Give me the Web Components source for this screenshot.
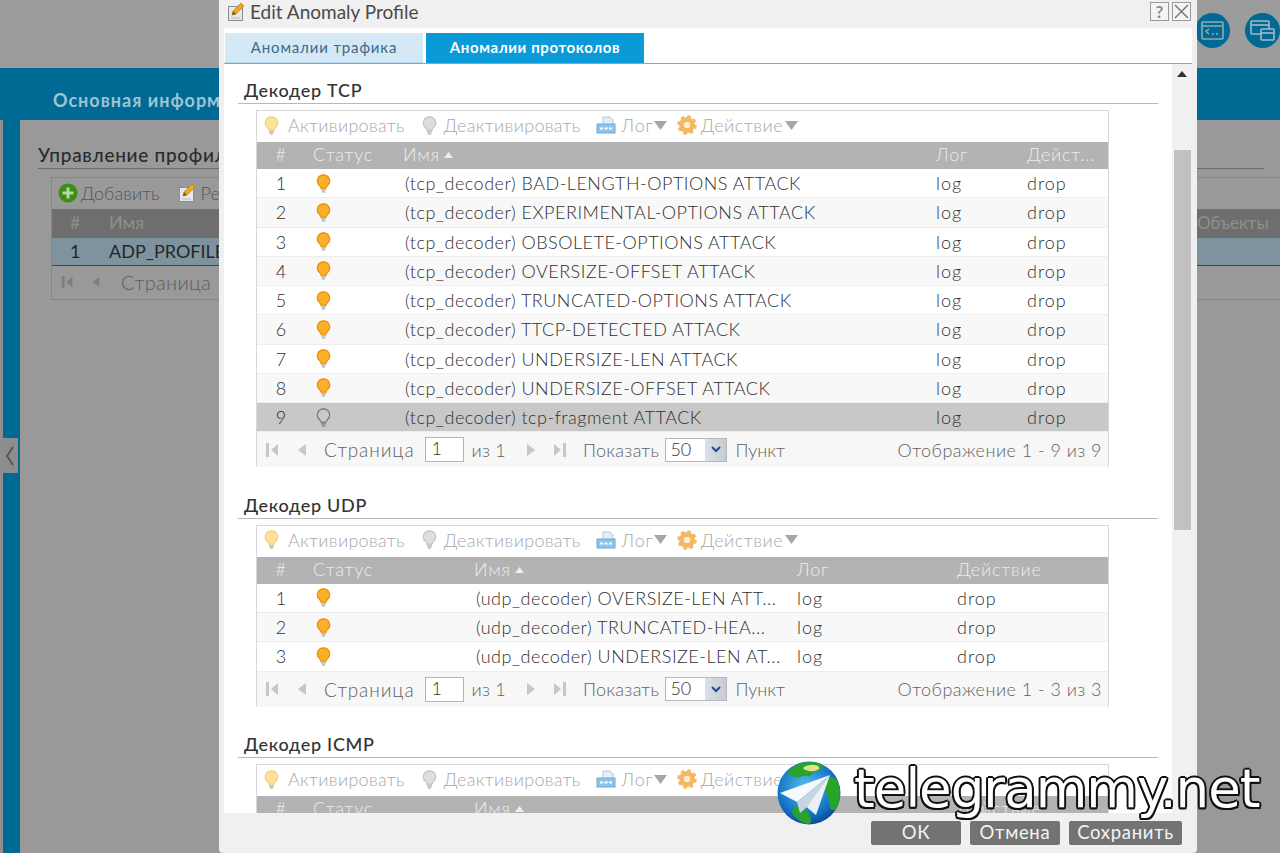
<!DOCTYPE html>
<html>
<head>
<meta charset="utf-8">
<title>Edit Anomaly Profile</title>
<style>
  html, body { margin: 0; height: 100%; overflow: hidden; }
  body { font-family: "Lato", "Open Sans", sans-serif; background: #9a9a9a; }
</style>
</head>
<body>
<bg-page></bg-page>
<anomaly-dialog></anomaly-dialog>
<tg-mark></tg-mark>

<script>
const BULB_ON = ['#fbb02a', '#ee8f00'];
const BULB_PALE = ['#ffe29a', '#f4cf78'];
const BULB_OFF = ['#dedede', '#c4c4c4'];

function bulb(c, outline) {
  const fill = outline ? 'none' : c[0];
  const edge = outline ? '#777' : c[1];
  return `<svg width="15" height="21" viewBox="0 0 16 21"><path d="M8 1.200a6.600 6.600 0 0 0-4 11.800c.9.8 1.200 1.500 1.300 2.500h5.400c.1-1 .4-1.700 1.300-2.500A6.600 6.600 0 0 0 8 1.200z" fill="${fill}" stroke="${edge}" stroke-width="1.300"/><path d="M5.400 16.500h5.200v1.500H5.400zM6.300 18.700h3.400V20H6.300z" fill="${outline ? '#777' : '#a8a8a8'}"/></svg>`;
}

const LOG_ICON = `<svg width="20" height="18" viewBox="0 0 20 18"><path d="M7 1h7l3 3v5H7z" fill="#e6eef5" stroke="#b5c6d6"/><rect x="1" y="8" width="18" height="9" fill="#8cc4ea" stroke="#6ea9d2"/><path d="M4 12.500h3M8.500 12.500h3M13 12.500h3" stroke="#fff" stroke-width="2"/></svg>`;
const GEAR_ICON = `<svg width="20" height="20" viewBox="0 0 20 20"><circle cx="10" cy="10" r="5.500" fill="none" stroke="#f3b765" stroke-width="5"/><circle cx="10" cy="10" r="8.200" fill="none" stroke="#f3b765" stroke-width="3.200" stroke-dasharray="3.400 3.040"/><circle cx="10" cy="10" r="3" fill="#fff0cf"/></svg>`;
const EDIT_ICON = `<svg width="20" height="21" viewBox="0 0 20 21"><rect x="1.500" y="5.500" width="14" height="14" fill="#e8e8e8" stroke="#8c8c8c"/><path d="M5 14l1-4 8-8 3 3-8 8z" fill="#f2a51e" stroke="#c87a00" stroke-width=".7"/><path d="M5 14l4-1-3-3z" fill="#7a5a30"/><path d="M4 17h9" stroke="#bbb"/></svg>`;
const DOWN_TRI = `<svg width="13" height="9" viewBox="0 0 13 9" style="flex:none"><path d="M0 0h13L6.500 9z" fill="#a6a6a6"/></svg>`;

class BgPage extends HTMLElement {
  constructor() {
    super();
    this.attachShadow({ mode: 'open' });
    this.shadowRoot.innerHTML = `
      <style>
        :host { display: flex; flex-direction: column; height: 853px; color: #2b2b2b; font-size: 18px; background: #999; }
        .top { height: 68px; flex: none; background: #9c9c9c; display: flex; justify-content: flex-end; align-items: flex-start; gap: 15px; padding: 13px 0 0; box-sizing: border-box; }
        .circle { width: 35px; height: 35px; border-radius: 50%; background: #006a94; display: flex; align-items: center; justify-content: center; }
        .blue { height: 52px; flex: none; background: #006a94; color: #9ec3d3; font-weight: 700; font-size: 18px; padding: 21px 0 0 53px; box-sizing: border-box; letter-spacing: 1px; white-space: nowrap; }
        .main { flex: 1; display: flex; min-height: 0; }
        .side { width: 3px; background: #8f8f8f; }
        .rail { width: 17px; background: #006a94; display: flex; align-items: center; }
        .handle { width: 16px; height: 35px; margin-left: -1px; background: #8d8d8d; display: flex; align-items: center; justify-content: center; position: relative; top: -31px; }
        .content { flex: 1; padding: 24px 16px 0 18px; min-width: 0; }
        h2 { margin: 0; font-size: 19px; line-height: 22px; font-weight: 500; letter-spacing: .7px; border-bottom: 1px solid #6d6d6d; padding-bottom: 2px; white-space: nowrap; }
        .grid { margin: 8px 0 0 13px; width: 1300px; border: 1px solid #868686; }
        .bar { height: 31px; display: flex; align-items: center; gap: 3px; padding: 0 0 2px 6px; box-sizing: border-box; color: #555; font-weight: 300; }
        .hd { height: 29px; background: #6e6e6e; color: #8e8e8e; display: flex; align-items: center; padding-bottom: 4px; box-sizing: border-box; }
        .row { height: 28px; background: #7f939f; color: #262626; display: flex; align-items: center; border-bottom: 1px solid #444; box-sizing: border-box; padding-bottom: 2px; }
        .num { width: 57px; padding-left: 18px; box-sizing: border-box; }
        .obj { position: absolute; left: 1197px; top: 212px; color: #8e8e8e; font-size: 17px; }
        .pg { height: 33px; display: flex; align-items: center; color: #5d5d5d; font-weight: 300; padding: 0 0 1px 9px; box-sizing: border-box; gap: 8px; }
        .pg .lbl { font-size: 20px; letter-spacing: .3px; margin-left: 12px; }
      </style>
      <div class="top">
        <div class="circle"><svg width="25" height="21" viewBox="0 0 25 21" fill="none" stroke="#8fa9b5" stroke-width="1.600"><rect x="2" y="2" width="21" height="17" rx="1"/><path d="M2 6h21M9 9l-3 2.500 3 2.500M12 14h2M16 14h2"/></svg></div>
        <div class="circle"><svg width="27" height="23" viewBox="0 0 27 23" fill="none" stroke="#a5bac4" stroke-width="1.600"><rect x="2" y="2" width="18" height="13" rx="1"/><path d="M2 6h18"/><rect x="12" y="10" width="13" height="11" rx="1" fill="#006a94"/><path d="M12 14h13"/></svg></div>
      </div>
      <div class="blue">Основная информация</div>
      <div class="main">
        <div class="side"></div>
        <div class="rail"><div class="handle"><svg width="10" height="22" viewBox="0 0 10 22"><path d="M8 2L2 11l6 9" fill="none" stroke="#4f4f4f" stroke-width="1.600"/></svg></div></div>
        <div class="content">
          <h2>Управление профилем</h2>
          <div class="grid">
            <div class="bar"><svg width="20" height="20" viewBox="0 0 20 20"><circle cx="10" cy="10" r="9.500" fill="#3c8f14"/><path d="M10 4.500v11M4.500 10h11" stroke="#b6d6a6" stroke-width="3"/></svg><span>Добавить</span><span style="width:12px"></span>${EDIT_ICON}<span>Редактировать</span></div>
            <div class="hd"><span class="num">#</span><span>Имя</span></div>
            <div class="row"><span class="num">1</span><span>ADP_PROFILE</span></div>
            <div class="pg">
              <svg width="14" height="16" viewBox="0 0 16 16" fill="#7e7e7e"><path d="M1 1h3v14H1zM13 2v12L6 8z"/></svg>
              <svg style="margin-left:8px" width="10" height="16" viewBox="0 0 12 16" fill="#7e7e7e"><path d="M10 2v12L2 8z"/></svg>
              <span class="lbl">Страница</span>
            </div>
          </div>
        </div>
      </div>
      <span class="obj">Объекты</span>`;
  }
}

class ToolBar extends HTMLElement {
  constructor() {
    super();
    this.attachShadow({ mode: 'open' });
    this.shadowRoot.innerHTML = `
      <style>
        :host { display: flex; align-items: center; height: 31px; padding: 0 0 3px 7px; box-sizing: border-box; color: #a8a8a8; font-size: 18px; font-weight: 300; letter-spacing: .3px; white-space: nowrap; overflow: hidden; }
        svg { flex: none; }
        .grp { display: flex; align-items: center; }
      </style>
      ${bulb(BULB_PALE)}<span style="margin-left:9px">Активировать</span>
      <div class="grp" style="margin-left:17px">${bulb(BULB_OFF)}<span style="margin-left:7px">Деактивировать</span></div>
      <div class="grp" style="margin-left:15px">${LOG_ICON}<span style="margin-left:6px;letter-spacing:.8px">Лог</span>${DOWN_TRI}</div>
      <div class="grp" style="margin-left:10px">${GEAR_ICON}<span style="margin-left:4px;letter-spacing:.5px">Действие</span><span style="margin-left:2px;display:flex">${DOWN_TRI}</span></div>`;
  }
}

class PagerBar extends HTMLElement {
  connectedCallback() {
    const total = this.getAttribute('total');
    this.attachShadow({ mode: 'open' });
    this.shadowRoot.innerHTML = `
      <style>
        :host { display: flex; align-items: center; height: 35px; background: #f7f7f7; color: #626262; font-size: 18px; font-weight: 300; white-space: nowrap; padding: 0 6px 0 8px; }
        svg { flex: none; }
        .lbl { font-size: 19px; letter-spacing: .9px; margin-left: 16px; }
        .box { width: 31px; height: 23px; border: 1px solid #b5b5b5; background: #fff; margin: 0 8px 0 10px; padding-left: 6px; line-height: 21px; color: #333; }
        .sel { width: 60px; height: 22px; border: 1px solid #b8b8b8; margin: 0 8px 0 6px; display: flex; background: #fff; color: #333; line-height: 21px; }
        .sel b { font-weight: 300; flex: 1; padding-left: 4px; }
        .sel u { width: 21px; background: linear-gradient(90deg, #dde0e6, #c5cbd5); display: flex; align-items: center; justify-content: center; }
        .end { margin-left: auto; letter-spacing: .45px; }
      </style>
      <svg width="16" height="16" viewBox="0 0 16 16" fill="#c6c6c6"><path d="M1 1h3v14H1zM13 2v12L6 8z"/></svg>
      <svg style="margin-left:15px" width="12" height="16" viewBox="0 0 12 16" fill="#c6c6c6"><path d="M10 2v12L2 8z"/></svg>
      <span class="lbl">Страница</span>
      <div class="box">1</div>
      <span style="letter-spacing:.2px">из 1</span>
      <svg style="margin-left:19px" width="12" height="16" viewBox="0 0 12 16" fill="#c6c6c6"><path d="M2 2v12l8-6z"/></svg>
      <svg style="margin-left:14px" width="16" height="16" viewBox="0 0 16 16" fill="#c6c6c6"><path d="M15 1h-3v14h3zM3 2v12l7-6z"/></svg>
      <span style="margin-left:16px;letter-spacing:.3px">Показать</span>
      <div class="sel"><b>50</b><u><svg width="10" height="7" viewBox="0 0 10 7"><path d="M1 1l4 4 4-4" fill="none" stroke="#24498c" stroke-width="2"/></svg></u></div>
      <span>Пункт</span>
      <span class="end">Отображение 1 - ${total} из ${total}</span>`;
  }
}

class DecoderTable extends HTMLElement {
  connectedCallback() {
    const cols = this.getAttribute('cols').split(',').map(Number);
    const rows = JSON.parse(this.getAttribute('rows') || '[]');
    const headers = ['#', 'Статус', 'Имя', 'Лог', this.getAttribute('last')];
    const tpl = `grid-template-columns:${cols.map(c => c + 'px').join(' ')}`;
    this.attachShadow({ mode: 'open' });
    this.shadowRoot.innerHTML = `
      <style>
        :host { display: block; margin-left: 18px; width: 853px; border: 1px solid #d8d8d8; border-bottom: 0; box-sizing: border-box; }
        .hd, .row { display: grid; align-items: center; font-size: 18px; white-space: nowrap; }
        .hd { height: 27px; background: #b3b3b3; color: #ececec; font-weight: 300; padding-bottom: 3px; box-sizing: border-box; letter-spacing: .8px; }
        .row { height: 29.250px; color: #303030; background: #fff; box-sizing: border-box; border-bottom: 1px solid #ededed; font-weight: 300; }
        .row:nth-child(even) { background: #f8f8f8; }
        .row.sel { background: #c8c8c8; }
        .c { min-width: 0; }
        .n { text-align: center; padding-right: 8px; }
        .arrow { display: inline-block; margin-left: 4px; vertical-align: 3px; }
        .name { padding-left: 2px; letter-spacing: .5px; }
        .v { letter-spacing: 1px; }
      </style>
      <tool-bar></tool-bar>
      <div class="hd" style="${tpl}">
        <span class="c n">${headers[0]}</span>
        <span class="c">${headers[1]}</span>
        <span class="c">${headers[2]}<svg class="arrow" width="9" height="6" viewBox="0 0 9 6"><path d="M4.500 0L9 6H0z" fill="#eee"/></svg></span>
        <span class="c">${headers[3]}</span>
        <span class="c">${headers[4]}</span>
      </div>
      <div>
      ${rows.map((r, i) => `
        <div class="row ${r.off ? 'sel' : ''}" style="${tpl}">
          <span class="c n">${i + 1}</span>
          <span class="c" style="display:flex;padding-left:3px">${r.off ? bulb(BULB_OFF, true) : bulb(BULB_ON)}</span>
          <span class="c name">${r.name}</span>
          <span class="c v">log</span>
          <span class="c v">drop</span>
        </div>`).join('')}
      </div>
      ${rows.length ? `<pager-bar total="${rows.length}"></pager-bar>` : ''}`;
  }
}

class DecoderSection extends HTMLElement {
  constructor() {
    super();
    this.attachShadow({ mode: 'open' });
    this.shadowRoot.innerHTML = `
      <style>
        :host { display: block; margin-bottom: 23.500px; }
        h3 { margin: 0 0 6px; font-size: 18px; font-weight: 500; color: #333; letter-spacing: .7px; line-height: 28px; padding-left: 6px; border-bottom: 1px solid #b8b8b8; height: 28px; box-sizing: border-box; }
      </style>
      <h3></h3>
      <slot></slot>`;
  }
  connectedCallback() { this.shadowRoot.querySelector('h3').textContent = this.getAttribute('title'); }
}

class AnomalyDialog extends HTMLElement {
  constructor() {
    super();
    this.attachShadow({ mode: 'open' });
    const tcp = ['BAD-LENGTH-OPTIONS', 'EXPERIMENTAL-OPTIONS', 'OBSOLETE-OPTIONS', 'OVERSIZE-OFFSET', 'TRUNCATED-OPTIONS', 'TTCP-DETECTED', 'UNDERSIZE-LEN', 'UNDERSIZE-OFFSET']
      .map(n => ({ name: `(tcp_decoder) ${n} ATTACK` }));
    tcp.push({ name: '(tcp_decoder) tcp-fragment ATTACK', off: true });
    const udp = ['OVERSIZE-LEN ATT...', 'TRUNCATED-HEA...', 'UNDERSIZE-LEN AT...'].map(n => ({ name: `(udp_decoder) ${n}` }));
    const attr = v => JSON.stringify(v).replace(/"/g, '&quot;');
    this.shadowRoot.innerHTML = `
      <style>
        :host { position: absolute; left: 219px; top: 0; width: 978px; height: 853px; background: #f0f0f0; display: flex; flex-direction: column; color: #444; border-radius: 0 0 4px 4px; overflow: hidden; }
        .title { height: 28px; flex: none; display: flex; align-items: center; padding: 0 6px 5px 8px; box-sizing: border-box; gap: 3px; font-size: 19px; color: #4a4a4a; }
        .title span { flex: 1; }
        .wb { width: 17px; height: 17px; border: 1px solid #9a9a9a; color: #8a8a8a; display: flex; align-items: center; justify-content: center; background: #f4f4f4; font-size: 17px; font-weight: 700; }
        .panel { flex: 1; min-height: 0; margin: 0 5px; background: #fff; display: flex; flex-direction: column; }
        .tabs { height: 36px; flex: none; display: flex; align-items: flex-start; padding-top: 5px; border-bottom: 1px solid #5bb5dc; box-sizing: border-box; }
        .tab { height: 30px; width: 198px; margin: 0 3px 0 1px; padding-bottom: 2px; box-sizing: border-box; display: flex; align-items: center; justify-content: center; font-size: 15px; letter-spacing: .85px; background: #d5e8f5; color: #3d6a8a; border-bottom: 1px solid #b5d8ee; }
        .tab.on { width: 218px; margin: 0; background: #0a9ad8; color: #fff; font-weight: 700; letter-spacing: .6px; border-bottom: 0; }
        .scroll { flex: 1; min-height: 0; display: flex; }
        .body { flex: 1; min-width: 0; padding: 12px 14px 0 14px; overflow: hidden; }
        .sb { width: 20px; flex: none; background: #f1f1f1; padding-top: 7px; box-sizing: border-box; display: flex; flex-direction: column; align-items: center; }
        .sb svg { flex: none; }
        .thumb { width: 17px; height: 380px; background: #c1c1c1; margin-top: 73px; }
        .foot { height: 40px; flex: none; display: flex; justify-content: flex-end; align-items: flex-start; gap: 9px; padding: 8px 15px 0 0; box-sizing: border-box; }
        .btn { height: 24px; background: #737373; color: #f4f4f4; font-size: 18.500px; line-height: 22px; text-align: center; border-radius: 2px; letter-spacing: .7px; }
      </style>
      <div class="title">${EDIT_ICON}<span>Edit Anomaly Profile</span><div class="wb">?</div><div class="wb"><svg width="15" height="15" viewBox="0 0 15 15"><path d="M1 1l13 13M14 1L1 14" stroke="#7a7a7a" stroke-width="1.500"/></svg></div></div>
      <div class="panel">
        <div class="tabs"><div class="tab">Аномалии трафика</div><div class="tab on">Аномалии протоколов</div></div>
        <div class="scroll">
          <div class="body">
            <decoder-section title="Декодер TCP">
              <decoder-table cols="56,90,533,91,81" last="Дейст..." rows="${attr(tcp)}"></decoder-table>
            </decoder-section>
            <decoder-section title="Декодер UDP">
              <decoder-table cols="56,161,323,160,151" last="Действие" rows="${attr(udp)}"></decoder-table>
            </decoder-section>
            <decoder-section title="Декодер ICMP">
              <decoder-table cols="56,161,323,160,151" last="Действие"></decoder-table>
            </decoder-section>
          </div>
          <div class="sb"><svg width="10" height="6" viewBox="0 0 10 6"><path d="M5 0l5 6H0z" fill="#333"/></svg><div class="thumb"></div></div>
        </div>
      </div>
      <div class="foot">
        <div class="btn" style="width:90px">ОК</div>
        <div class="btn" style="width:90px">Отмена</div>
        <div class="btn" style="width:113px">Сохранить</div>
      </div>`;
  }
}

class TgMark extends HTMLElement {
  constructor() {
    super();
    this.attachShadow({ mode: 'open' });
    this.shadowRoot.innerHTML = `
      <style>
        :host { position: absolute; left: 777px; top: 761px; display: flex; align-items: center; }
        svg { flex: none; }
        span { margin-left: 13px; margin-top: -9px; font: 53px "DejaVu Sans", sans-serif; letter-spacing: -1px; color: #fff;
          text-shadow: 2px 0 #111, -2px 0 #111, 0 2px #111, 0 -2px #111, 1.500px 1.500px #111, -1.500px 1.500px #111, 1.500px -1.500px #111, -1.500px -1.500px #111; }
      </style>
      <svg width="64" height="64" viewBox="0 0 64 64">
        <defs><radialGradient id="g" cx=".45" cy=".4" r=".65"><stop offset="0" stop-color="#55c0ee"/><stop offset=".7" stop-color="#1272c4"/><stop offset="1" stop-color="#0a3f8c"/></radialGradient></defs>
        <circle cx="32" cy="32" r="31.500" fill="url(#g)"/>
        <path d="M10 12C16 4 28-1 42 2c6 3 4 7-2 8s-4 6-10 5-8 3-12 1-6-1-8-4zM47 20c5-5 11-5 14 1 3 9 3 20-3 28-5 1-6-4-6-9s-7-14-5-20zM17 45c5 1 13 3 15 8s4 7 0 10c-6 0-13-5-17-11z" fill="#2aa32a"/>
        <path d="M27 6c5-3 13-3 15 0s-6 5-10 4-7-2-5-4z" fill="#e3e08a"/>
        <path d="M53 14L3 32l17 9z" fill="#f7fafc"/>
        <path d="M53 14L26 43l13 11z" fill="#eaf0f6"/>
        <path d="M53 14L20 41l3 11 7-6z" fill="#c6d5e2"/>
      </svg>
      <span>telegrammy.net</span>`;
  }
}

customElements.define('bg-page', BgPage);
customElements.define('tool-bar', ToolBar);
customElements.define('pager-bar', PagerBar);
customElements.define('decoder-table', DecoderTable);
customElements.define('decoder-section', DecoderSection);
customElements.define('anomaly-dialog', AnomalyDialog);
customElements.define('tg-mark', TgMark);
</script>
</body>
</html>
